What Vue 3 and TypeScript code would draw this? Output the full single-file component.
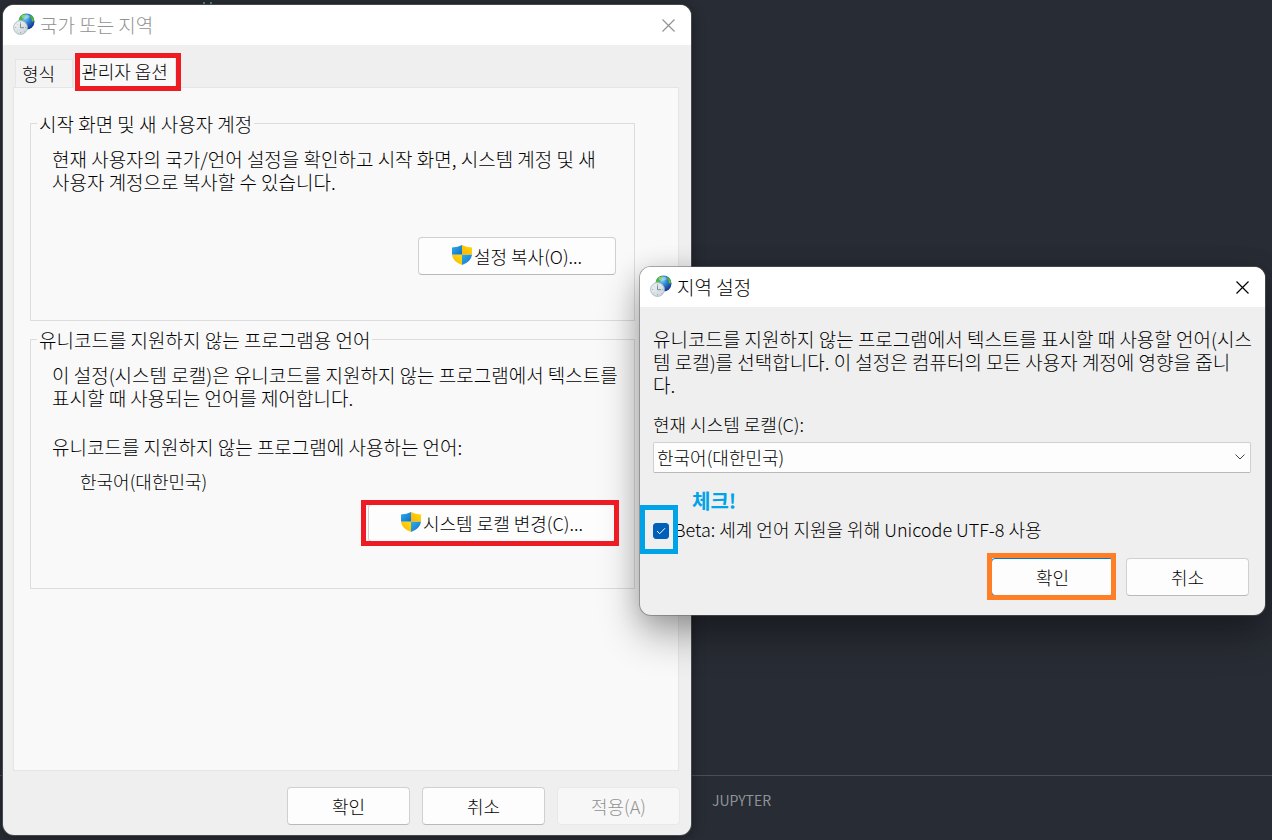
<script setup lang="ts">
import { ref } from 'vue'

const locale = ref('ko-KR')
const locales = [{ value: 'ko-KR', label: '한국어(대한민국)' }]
const useUtf8 = ref(true)
const tabs = ['형식', '관리자 옵션']
const activeTab = ref(1)
</script>

<template>
  <div class="desktop">
    <svg width="0" height="0" class="defs" aria-hidden="true">
      <defs>
        <radialGradient id="sea" cx="0.4" cy="0.3" r="0.75">
          <stop offset="0" stop-color="#7fd0f5" />
          <stop offset="0.45" stop-color="#2b7fd0" />
          <stop offset="1" stop-color="#132a86" />
        </radialGradient>
        <linearGradient id="land" x1="0" y1="0" x2="0" y2="1">
          <stop offset="0" stop-color="#3f9a35" />
          <stop offset="1" stop-color="#5fd024" />
        </linearGradient>
        <linearGradient id="face" x1="0" y1="0" x2="1" y2="1">
          <stop offset="0" stop-color="#f2f6f8" />
          <stop offset="1" stop-color="#c9d3d8" />
        </linearGradient>
        <linearGradient id="shieldBlue" x1="0" y1="0" x2="1" y2="1">
          <stop offset="0" stop-color="#35ace8" />
          <stop offset="1" stop-color="#0a70cc" />
        </linearGradient>
        <linearGradient id="shieldGold" x1="1" y1="0" x2="0" y2="1">
          <stop offset="0" stop-color="#ffdc0a" />
          <stop offset="1" stop-color="#fbb204" />
        </linearGradient>
        <symbol id="region" viewBox="0 0 22 22">
          <circle cx="13.500" cy="8.500" r="8" fill="url(#sea)" />
          <path d="M6 6C7 2.500 9.500 1 12 .7L13.500 2l-2 1 .6 1.500-1.800 1.300-2 .5-.6 2-1.700.4L5.700 8zM17.500 2c1.800 1 3 2.700 3.500 4.500l-.8 2.500-1.400-1-.4-2.800-1.700-1.400z" fill="url(#land)" />
          <ellipse cx="12.500" cy="3.500" rx="4" ry="2" fill="#d9f4fb" opacity=".45" />
          <circle cx="7.500" cy="14.500" r="6.900" fill="url(#face)" stroke="#a9b5bb" stroke-width=".9" />
          <path d="M7.500 9v1.200M7.500 19v1.200M2 14.500h1.200M12 14.500h1.200M3.800 10.800l.6.6M11 18l.6.6M3.800 18.200l.6-.6" stroke="#8e999f" stroke-width=".7" />
          <path d="M7.500 10.500v4.200h3.500" fill="none" stroke="#6f828c" stroke-width=".9" />
        </symbol>
        <symbol id="shield" viewBox="0 0 20 20">
          <path d="M10 0Q6.200 2.300 0 2.500V9.700H10z" fill="url(#shieldBlue)" />
          <path d="M10 0Q13.800 2.300 20 2.500V9.700H10z" fill="url(#shieldGold)" />
          <path d="M0 9.700Q.8 16.500 10 20V9.700z" fill="url(#shieldGold)" />
          <path d="M20 9.700Q19.200 16.500 10 20V9.700z" fill="url(#shieldBlue)" />
        </symbol>
      </defs>
    </svg>

    <div class="editor"><i class="mark"></i><i class="mark"></i></div>
    <div class="panel-bar"><span>JUPYTER</span></div>

    <section class="window region-window" aria-labelledby="region-title">
      <header class="titlebar inactive">
        <svg class="app-icon"><use href="#region" /></svg>
        <h1 id="region-title">국가 또는 지역</h1>
        <button class="close" type="button" aria-label="닫기">
          <svg viewBox="0 0 13 13"><path d="M.5.5l12 12M12.500.5l-12 12" /></svg>
        </button>
      </header>
      <div class="region-body">
        <div class="tabs" role="tablist">
          <div v-for="(tab, i) in tabs" :key="tab" class="tab-slot">
            <button
              type="button"
              role="tab"
              class="tab"
              :class="{ active: i === activeTab }"
              :aria-selected="i === activeTab"
              @click="activeTab = i"
            >{{ tab }}</button>
            <span v-if="i === 1" class="outline outline-tab"></span>
          </div>
        </div>
        <div class="page" role="tabpanel">
          <fieldset>
            <legend>시작 화면 및 새 사용자 계정</legend>
            <p>현재 사용자의 국가/언어 설정을 확인하고 시작 화면, 시스템 계정 및 새<br />사용자 계정으로 복사할 수 있습니다.</p>
            <div class="action copy-action">
              <button class="btn" type="button">
                <svg class="shield"><use href="#shield" /></svg>설정 복사(O)...
              </button>
            </div>
          </fieldset>
          <fieldset>
            <legend>유니코드를 지원하지 않는 프로그램용 언어</legend>
            <p>이 설정(시스템 로캘)은 유니코드를 지원하지 않는 프로그램에서 텍스트를<br />표시할 때 사용되는 언어를 제어합니다.</p>
            <p class="language-label">유니코드를 지원하지 않는 프로그램에 사용하는 언어:</p>
            <p class="language">한국어(대한민국)</p>
            <div class="action locale-action">
              <button class="btn" type="button">
                <svg class="shield"><use href="#shield" /></svg>시스템 로캘 변경(C)...
              </button>
              <span class="outline outline-locale"></span>
            </div>
          </fieldset>
        </div>
        <footer class="buttons">
          <button class="btn" type="button">확인</button>
          <button class="btn" type="button">취소</button>
          <button class="btn" type="button" disabled>적용(A)</button>
        </footer>
      </div>
    </section>

    <section class="window locale-window" role="dialog" aria-labelledby="locale-title">
      <header class="titlebar">
        <svg class="app-icon"><use href="#region" /></svg>
        <h2 id="locale-title">지역 설정</h2>
        <button class="close" type="button" aria-label="닫기">
          <svg viewBox="0 0 13 13"><path d="M.5.5l12 12M12.500.5l-12 12" /></svg>
        </button>
      </header>
      <div class="locale-body">
        <p>유니코드를 지원하지 않는 프로그램에서 텍스트를 표시할 때 사용할 언어(시스<br />템 로캘)를 선택합니다. 이 설정은 컴퓨터의 모든 사용자 계정에 영향을 줍니<br />다.</p>
        <label class="select-label" for="locale">현재 시스템 로캘(C):</label>
        <div class="select-wrap">
          <select id="locale" v-model="locale">
            <option v-for="l in locales" :key="l.value" :value="l.value">{{ l.label }}</option>
          </select>
          <svg class="chevron" viewBox="0 0 10 6"><path d="M.5.5L5 5 9.500.5" /></svg>
        </div>
        <strong class="hint">체크!</strong>
        <div class="check-row">
          <input id="utf8" v-model="useUtf8" type="checkbox" />
          <svg v-if="useUtf8" class="tick" viewBox="0 0 10 8"><path d="M1 4l2.700 2.700L9 1.200" /></svg>
          <label for="utf8">Beta: 세계 언어 지원을 위해 Unicode UTF-8 사용</label>
          <span class="outline outline-check"></span>
        </div>
        <footer class="buttons">
          <div class="ok">
            <button class="btn default" type="button">확인</button>
            <span class="outline outline-ok"></span>
          </div>
          <button class="btn" type="button">취소</button>
        </footer>
      </div>
    </section>
  </div>
</template>

<style>
body {
  margin: 0;
  background: #282c34;
}
</style>

<style scoped>
* {
  box-sizing: border-box;
}

.desktop {
  position: relative;
  display: flex;
  flex-direction: column;
  min-height: 100vh;
  overflow: hidden;
  background: #282c34;
  color: #000;
  font: 300 19px/23px "Noto Sans CJK KR", "Noto Sans", sans-serif;
}

.defs {
  position: absolute;
}

.editor {
  display: flex;
  flex: 1;
  gap: 5px;
  padding: 2px 0 0 203px;
}

.mark {
  width: 2px;
  height: 3px;
  background: #4e8a68;
}

.panel-bar {
  display: flex;
  justify-content: flex-start;
  height: 65px;
  padding: 13px 0 0 712px;
  border-top: 1px solid #4b4e54;
  color: #8f9399;
  font-size: 14px;
  font-weight: 400;
}

h1,
h2,
p {
  margin: 0;
  font: inherit;
}

button,
select,
input {
  margin: 0;
  font: inherit;
  color: inherit;
}

.window {
  position: absolute;
  display: flex;
  flex-direction: column;
  border-radius: 11px;
  background: #efefef;
}

.region-window {
  top: 5px;
  right: 581px;
  bottom: 5px;
  left: 3px;
  box-shadow: 0 0 0 1px #45494f, 0 2px 14px rgba(0, 0, 0, 0.4);
}

.locale-window {
  top: 267px;
  right: 7px;
  left: 640px;
  box-shadow: 0 0 0 1px rgba(100, 100, 100, 0.5), 0 20px 40px rgba(0, 0, 0, 0.32), 0 4px 26px rgba(0, 0, 0, 0.16);
}

.titlebar {
  display: flex;
  align-items: center;
  height: 40px;
  padding: 0 16px 0 10px;
  border-radius: 11px 11px 0 0;
  background: #fff;
}

.titlebar h1,
.titlebar h2 {
  margin-bottom: 2px;
}

.inactive {
  color: #929292;
}

.app-icon {
  width: 22px;
  height: 22px;
  margin: 0 5px 2px 0;
}

.close {
  display: flex;
  margin-left: auto;
  padding: 0;
  border: 0;
  background: none;
}

.close svg {
  width: 13px;
  height: 13px;
  fill: none;
  stroke: currentColor;
  stroke-width: 1.2;
}

.region-body {
  display: flex;
  flex: 1;
  flex-direction: column;
  padding: 12px 12px 10px 10px;
}

.tabs {
  display: flex;
  align-items: flex-end;
  height: 30px;
  padding-left: 2px;
}

.tab-slot {
  position: relative;
  display: flex;
}

.tab {
  height: 28px;
  padding: 0 17px 0 6px;
  border: 1px solid #e5e5e5;
  border-bottom: 0;
  background: #f3f3f3;
  font-size: 18px;
}

.tab.active {
  z-index: 1;
  height: 31px;
  margin-bottom: -1px;
  padding: 0 7px 4px;
  background: #f9f9f9;
}

.page {
  flex: 1;
  padding: 24px 43px 0 16px;
  border: 1px solid #e5e5e5;
  background: #f9f9f9;
}

fieldset {
  min-width: 0;
  margin: 0 0 7px;
  padding: 12px 18px 46px 21px;
  border: 1px solid #dcdcdc;
}

legend {
  margin-left: -15px;
  padding: 0 2px;
}

fieldset p,
.locale-body p {
  white-space: nowrap;
}

.language-label {
  margin-top: 26px;
}

.language {
  margin: 12px 0 0 28px;
  font-size: 18px;
}

.action {
  position: relative;
  display: flex;
  width: 198px;
  margin-left: auto;
}

.action .btn {
  width: 100%;
}

.copy-action {
  margin: 44px 0 -1px auto;
}

.locale-action {
  width: 248px;
  margin-top: 11px;
}

.btn {
  display: flex;
  align-items: center;
  justify-content: center;
  width: 123px;
  height: 38px;
  padding: 0;
  border: 1px solid #d0d0d0;
  border-bottom-color: #b9b9b9;
  border-radius: 4px;
  background: #fdfdfd;
  font-size: 18px;
  white-space: nowrap;
}

.btn:disabled {
  border-color: #e8e8e8;
  background: #f7f7f7;
  color: #929292;
}

.btn.default {
  border-color: #0078d4;
}

.shield {
  width: 20px;
  height: 20px;
  margin: 0 2px 2px 0;
}

.buttons {
  display: flex;
  justify-content: flex-end;
  gap: 12px;
}

.region-body .buttons {
  margin: 16px -1px 0 0;
}

.locale-body {
  padding: 20px 14px 19px 13px;
}

.select-label {
  display: block;
  margin-top: 17px;
  font-size: 18px;
}

.select-wrap {
  position: relative;
  margin-top: 6px;
}

select {
  display: block;
  width: 100%;
  height: 31px;
  padding: 0 24px 0 3px;
  border: 1px solid #d0d0d0;
  border-bottom-color: #b9b9b9;
  border-radius: 2px;
  appearance: none;
  background: #fdfdfd;
  font-size: 18px;
}

.chevron {
  position: absolute;
  top: 12px;
  right: 6px;
  width: 10px;
  height: 6px;
  fill: none;
  stroke: #444;
  pointer-events: none;
}

.hint {
  display: block;
  margin: 16px 0 6px 39px;
  color: #00a2e8;
  font-size: 20px;
  font-weight: 700;
}

.check-row {
  position: relative;
  display: flex;
  align-items: center;
  gap: 5px;
}

.check-row input {
  width: 16px;
  height: 16px;
  margin-top: 2px;
  border: 1px solid #8a8a8a;
  border-radius: 3px;
  appearance: none;
  background: #fff;
}

.check-row input:checked {
  border-color: #005fb8;
  background: #005fb8;
}

.check-row label {
  font-size: 18px;
}

.tick {
  position: absolute;
  top: 9px;
  left: 3px;
  width: 10px;
  height: 8px;
  fill: none;
  stroke: #fff;
  pointer-events: none;
}

.locale-body .buttons {
  margin-top: 17px;
  padding-right: 2px;
}

.ok {
  position: relative;
}

.outline {
  position: absolute;
  z-index: 2;
  border: 5px solid #ed1c24;
  pointer-events: none;
}

.outline-tab {
  top: -4px;
  right: -5px;
  bottom: -4px;
  left: 2px;
}

.outline-locale {
  inset: -4px -3px -4px -7px;
}

.outline-check {
  top: -13px;
  left: -13px;
  width: 38px;
  height: 49px;
  border-color: #00a2e8;
}

.outline-ok {
  inset: -5px -2px -4px -4px;
  border-color: #ff7f27;
}
</style>
